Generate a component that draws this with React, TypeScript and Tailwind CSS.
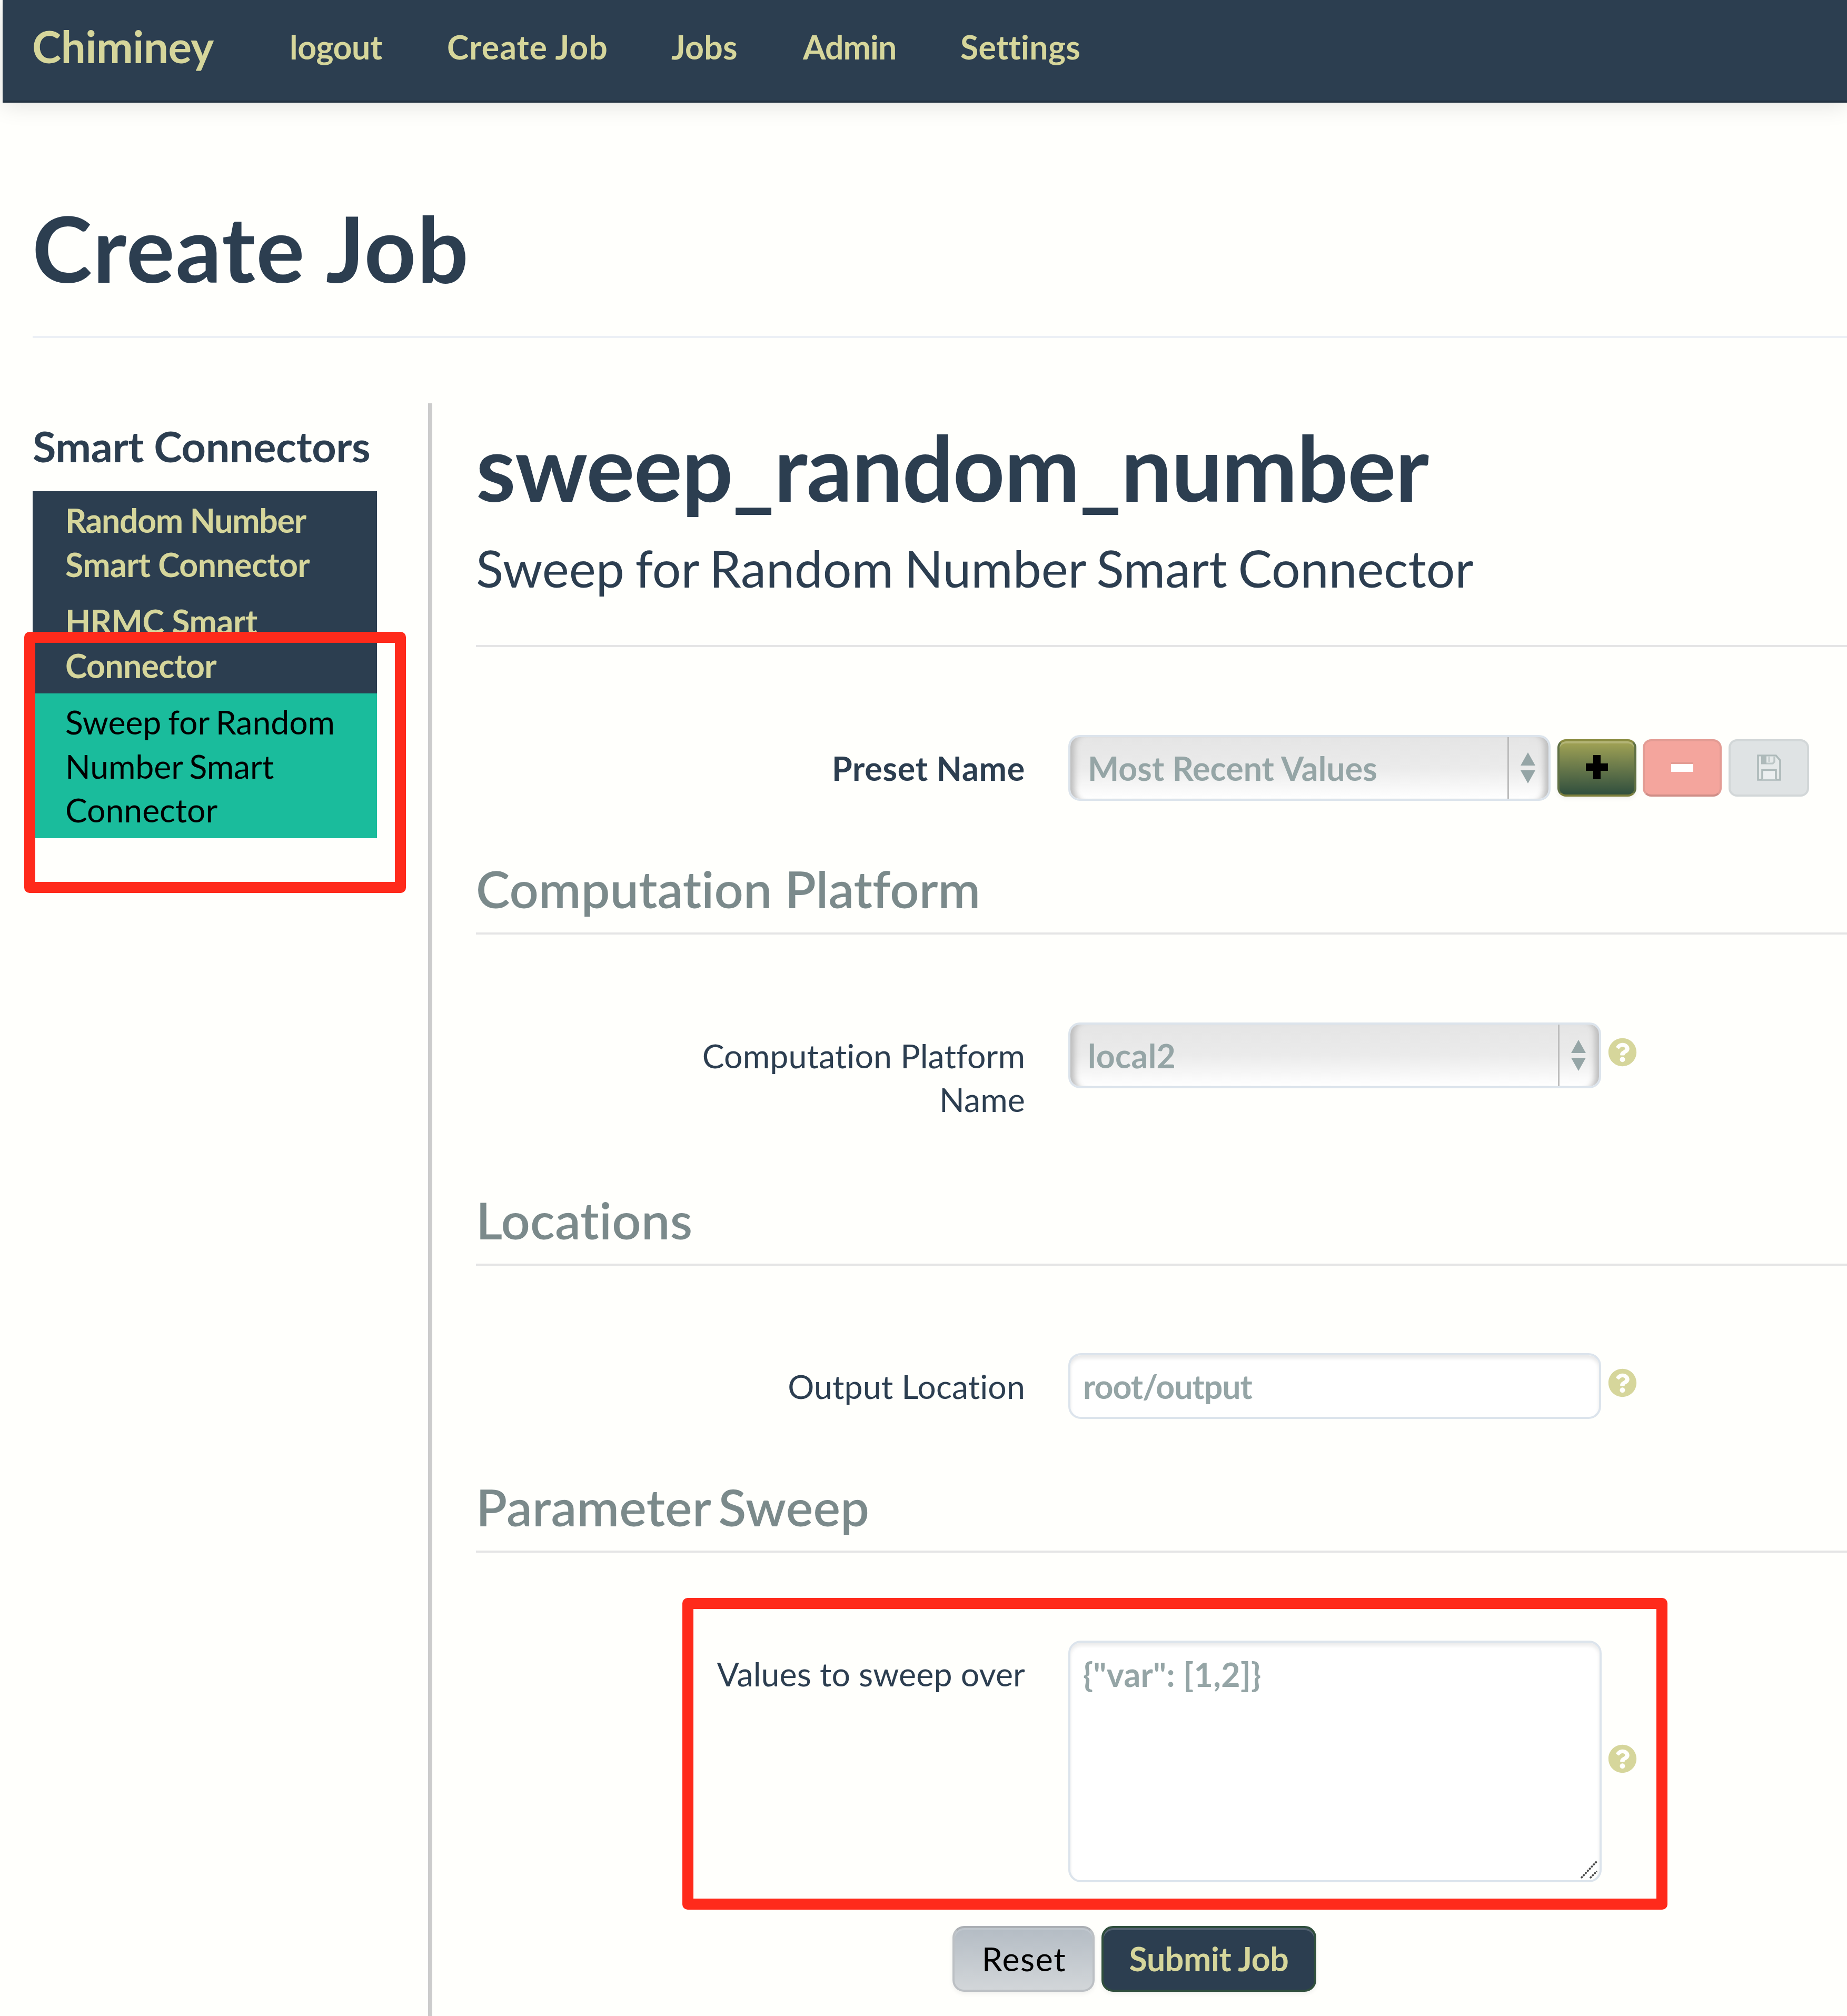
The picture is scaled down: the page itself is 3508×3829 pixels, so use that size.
import React from 'react';
import { FaQuestionCircle } from 'react-icons/fa';

function HelpIcon({ className }: { className: string }) {
  return <FaQuestionCircle className={`h-[55px] w-[55px] shrink-0 text-[#d6d69b] ${className}`} />;
}

function Legend({ children, className }: { children: React.ReactNode; className: string }) {
  return (
    <div className="border-b-[4px] border-[#e5e5e5] pb-[33px]">
      <h2 className={`text-[97px] leading-[100px] font-semibold text-[#7b8a8b] ${className}`}>{children}</h2>
    </div>
  );
}

function Row({ label, labelClass, className, children }: { label: string; labelClass?: string; className: string; children: React.ReactNode }) {
  return (
    <div className={`relative flex items-start ${className}`}>
      <label className={`mr-[82px] ml-[343px] w-[700px] shrink-0 pt-[21px] text-right leading-[83.5px] ${labelClass ?? ''}`}>{label}</label>
      {children}
    </div>
  );
}

function Select({ value, className, textClass }: { value: string; className: string; textClass: string }) {
  return (
    <div
      className={`flex h-[125px] shrink-0 overflow-hidden rounded-[22px] border-[4px] border-[#dce4ec] bg-linear-to-b from-[#e5e5e5] via-[#ebebeb] to-white shadow-[inset_18px_0_12px_-10px_#bdbdbd,inset_-18px_0_12px_-10px_#bdbdbd] ${className}`}
    >
      <span className={`flex-1 pt-[17px] pl-[33px] leading-[83.5px] font-bold text-[#95a5a6] ${textClass}`}>{value}</span>
      <span className="flex w-[78px] justify-center border-l-[3px] border-[#bcbcbc] pt-[29px] pr-[4px]">
        <svg width="28" height="60" viewBox="0 0 28 60" fill="#95a5a6">
          <path d="M14 0L28 25H0ZM0 34H28L14 59Z" />
        </svg>
      </span>
    </div>
  );
}

const links: [string, string][] = [
  ['logout', 'w-[299px] tracking-[-0.4px]'],
  ['Create Job', 'w-[426px] tracking-[1px]'],
  ['Jobs', 'w-[250px] tracking-[0.2px]'],
  ['Admin', 'w-[299px] tracking-[-0.9px]'],
  ['Settings', 'tracking-[0.3px]'],
];

export default function App() {
  return (
    <div className="flex h-[3829px] w-[3508px] flex-col overflow-hidden bg-[#fffffc] font-['Lato',sans-serif] text-[62.6px] text-[#2c3e50] [font-variant-ligatures:none]">
      <nav className="ml-[5px] flex h-[195px] shrink-0 items-start border-b-[4px] border-[#243342] bg-[#2c3e50] pl-[56px] leading-[177px] font-bold text-[#d6d69b] shadow-[0_4px_42px_rgba(0,0,0,0.12)]">
        <span className="w-[489px] text-[83.4px] tracking-[-0.5px]">Chiminey</span>
        {links.map(([t, c]) => (
          <a key={t} className={c}>{t}</a>
        ))}
      </nav>

      <header className="ml-[62px] h-[446.5px] shrink-0 border-b-[4px] border-[#ecf0f5] pt-[190px]">
        <h1 className="-ml-px text-[172px] leading-[172px] font-bold tracking-[1.8px]">Create Job</h1>
      </header>

      <div className="mt-[124.5px] ml-[62px] flex flex-1">
        <aside className="relative w-[751px] shrink-0 pt-[39px]">
          <h3 className="text-[81px] leading-[84px] font-bold tracking-[-0.4px] whitespace-nowrap">Smart Connectors</h3>
          <ul className="mt-[43.6px] w-[654px] leading-[83.5px]">
            <li className="h-[192px] bg-[#2c3e50] pt-[13.5px] pl-[62px] font-bold text-[#d6d69b]">
              <span className="tracking-[-1.3px]">Random Number</span>
              <br />
              <span className="tracking-[-0.6px]">Smart Connector</span>
            </li>
            <li className="h-[192px] bg-[#2c3e50] pt-[13.5px] pl-[62px] font-bold text-[#d6d69b]">
              <span className="tracking-[-0.4px]">HRMC Smart</span>
              <br />
              <span className="tracking-[-0.7px]">Connector</span>
            </li>
            <li className="h-[275px] bg-[#1abc9c] pt-[12.5px] pl-[62px] tracking-[-0.1px] text-black [word-spacing:-3px]">
              Sweep for Random
              <br />
              Number Smart
              <br />
              Connector
            </li>
          </ul>
          <div className="absolute top-[434px] left-[-16px] h-[496px] w-[725px] rounded-[10px] border-[21px] border-[#ff2a1b]" />
        </aside>

        <main className="flex-1 border-l-[8px] border-[#cccccc] pt-[35px] pl-[83px]">
          <h1 className="text-[172px] leading-[172px] font-bold tracking-[-1.3px]">sweep_random_number</h1>
          <div className="mt-[55.5px] h-[200.5px] border-b-[4px] border-[#e5e5e5] text-[96.5px] leading-[100px] [word-spacing:-4px]">
            Sweep for Random Number Smart Connector
          </div>

          <Row label="Preset Name" labelClass="font-bold tracking-[0.8px]" className="mt-[167px] h-[242px]">
            <Select value="Most Recent Values" className="w-[916px]" textClass="tracking-[0.1px]" />
            <button className="mt-[8px] ml-[13px] flex h-[109px] w-[150px] shrink-0 items-center justify-center rounded-[16px] border-[4px] border-t-[#8a8c41] border-r-[#5f7043] border-b-[#7d7f3c] border-l-[#5f7043] bg-linear-to-b from-[#a3a454] to-[#304f3d] shadow-[inset_0_4px_0_rgba(255,255,255,0.2),0_4px_8px_rgba(0,0,0,0.05)]">
              <svg width="42" height="46" viewBox="0 0 42 46" className="-mt-[4px]">
                <path d="M14 0H28V16H42V30H28V46H14V30H0V16H14Z" fill="#000" />
              </svg>
            </button>
            <button className="mt-[8px] ml-[12px] flex h-[109px] w-[150px] shrink-0 items-center justify-center rounded-[16px] border-[4px] border-[#e39c94] border-b-[#cf8e87] bg-[#f4a59d]">
              <svg width="42" height="20" viewBox="0 0 42 20" className="-mt-[4px]">
                <path d="M0 0H42V5H0Z" fill="#e39c94" />
                <path d="M0 4H42V19H0Z" fill="#fff" />
              </svg>
            </button>
            <button className="mt-[8px] ml-[13px] flex h-[109px] w-[153px] shrink-0 items-center justify-center rounded-[16px] border-[4px] border-[#d2d7d8] bg-[#dfe3e4]">
              <svg width="46" height="54" viewBox="0 0 46 54" className="-mt-[1px] h-[50px]" preserveAspectRatio="none">
                <path d="M2 2H36L44 12V52H2Z" fill="#e6eaea" stroke="#aebaba" strokeWidth="3.6" />
                <path d="M8 2H18V20H8Z" fill="#aebaba" />
                <path d="M18 18.5H30L33 15V4" fill="none" stroke="#bcc6c6" strokeWidth="3.4" />
                <path d="M23 4V15" fill="none" stroke="#c3cccc" strokeWidth="3" />
                <path d="M10 51V32H36V51" fill="#eceff0" stroke="#aebaba" strokeWidth="3.6" />
              </svg>
            </button>
          </Row>

          <Legend className="tracking-[0.1px]">Computation Platform</Legend>
          <Row label="Computation Platform Name" className="mt-[166.5px] h-[325px]" labelClass="tracking-[0.1px]">
            <Select value="local2" className="w-[1012px]" textClass="tracking-[0.3px]" />
            <HelpIcon className="mt-[29px] ml-[13px]" />
          </Row>

          <Legend className="tracking-[0.3px]">Locations</Legend>
          <Row label="Output Location" className="mt-[166.5px] h-[242px]" labelClass="tracking-[0.1px]">
            <div className="h-[125px] w-[1012px] shrink-0 rounded-[24px] border-[4px] border-[#dce4ec] bg-white pt-[17px] pl-[24px] leading-[83.5px] font-bold tracking-[-1px] text-[#95a5a6] shadow-[inset_0_6px_6px_rgba(0,0,0,0.09)]">
              root/output
            </div>
            <HelpIcon className="mt-[29px] ml-[13px]" />
          </Row>

          <Legend className="tracking-[0.3px] [word-spacing:-9px]">Parameter Sweep</Legend>
          <Row label="Values to sweep over" className="mt-[166.5px] h-[542.5px]" labelClass="tracking-[0.1px]">
            <div className="flex h-[459.5px] w-[1013px] shrink-0 justify-between rounded-[24px] border-[4px] border-[#dce4ec] bg-white pt-[18px] pl-[24px] leading-[83.5px] font-bold tracking-[0.4px] text-[#95a5a6] shadow-[inset_0_6px_6px_rgba(0,0,0,0.08)]">
              <span>{'{"var": [1,2]}'}</span>
              <svg width="34" height="34" viewBox="0 0 34 34" className="mr-[2px] mb-[3px] self-end" stroke="#4a4a4a" strokeWidth="3.6" strokeDasharray="4 1.6">
                <path d="M1 33L31 1M18 33L31 20" />
              </svg>
            </div>
            <HelpIcon className="mt-[197px] ml-[12px]" />
            <div className="absolute top-[-81px] left-[392px] h-[592px] w-[1871px] rounded-[10px] border-[21px] border-[#ff2a1b]" />
          </Row>

          <div className="ml-[904.5px] flex leading-[83.5px]">
            <button className="h-[125px] w-[270px] rounded-[22px] border-[4px] border-[#bcc0c4] border-t-[#abafb3] bg-linear-to-b from-[#b4bcc4] to-[#d2d6d9] pb-[1px] pl-[3px] tracking-[1.6px] text-black shadow-[inset_0_4px_0_rgba(255,255,255,0.15),0_4px_8px_rgba(0,0,0,0.06)]">
              Reset
            </button>
            <button className="ml-[13px] h-[125px] w-[408px] rounded-[22px] border-[4px] border-[#304f3d] bg-[#2c3e50] pb-[1px] pl-[1px] font-bold tracking-[-0.4px] text-[#d6d69b] shadow-[inset_0_4px_0_rgba(255,255,255,0.18),0_4px_8px_rgba(0,0,0,0.06)]">
              Submit Job
            </button>
          </div>
        </main>
      </div>
    </div>
  );
}
